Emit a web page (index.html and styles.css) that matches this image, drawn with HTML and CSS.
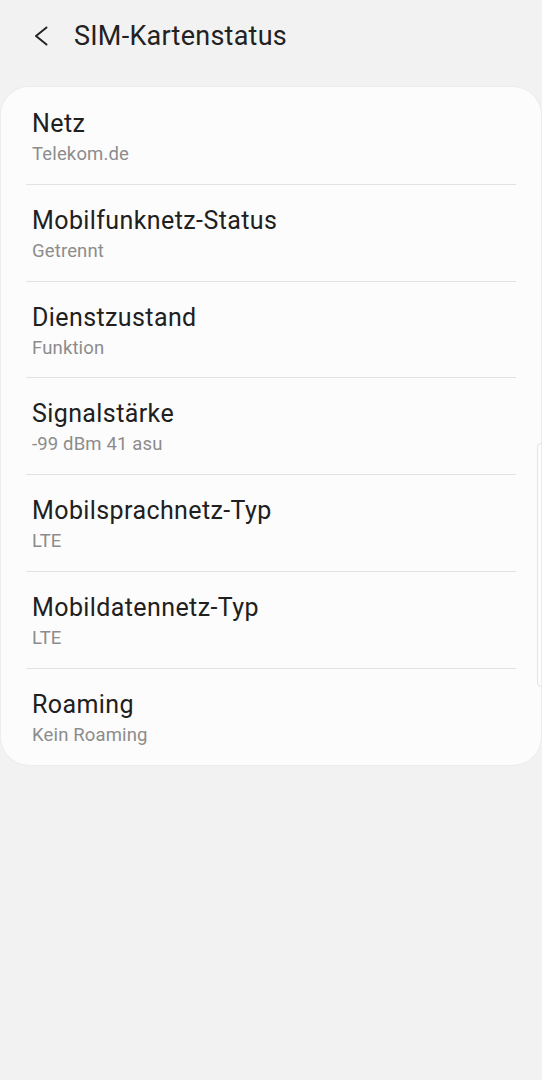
FILE: index.html
```html
<!DOCTYPE html>
<html lang="de">
<head>
    <meta charset="UTF-8">
    <meta name="viewport" content="width=device-width, initial-scale=1.0">
    <title>SIM-Kartenstatus</title>
    <link rel="stylesheet" href="styles.css">
</head>
<body>
    <div class="header">
        <svg class="back" width="14" height="20" viewBox="0 0 14 20">
            <polyline points="12.5,1.5 2,10 12.5,18.5" fill="none" stroke="#252525" stroke-width="2" stroke-linecap="round" stroke-linejoin="round"/>
        </svg>
        <span class="title">SIM-Kartenstatus</span>
    </div>

    <div class="card">
        <div class="row">
            <span class="label">Netz</span>
            <span class="value">Telekom.de</span>
        </div>
        <div class="row">
            <span class="label">Mobilfunknetz-Status</span>
            <span class="value">Getrennt</span>
        </div>
        <div class="row">
            <span class="label">Dienstzustand</span>
            <span class="value">Funktion</span>
        </div>
        <div class="row">
            <span class="label">Signalstärke</span>
            <span class="value">-99 dBm 41 asu</span>
        </div>
        <div class="row">
            <span class="label">Mobilsprachnetz-Typ</span>
            <span class="value">LTE</span>
        </div>
        <div class="row">
            <span class="label">Mobildatennetz-Typ</span>
            <span class="value">LTE</span>
        </div>
        <div class="row">
            <span class="label">Roaming</span>
            <span class="value">Kein Roaming</span>
        </div>
    </div>

    <div class="scrollbar"></div>
</body>
</html>
```

FILE: styles.css
```css
* {
  box-sizing: border-box;
}
body {
  margin: 0;
  background: #f2f2f2;
  font-family: Roboto, "Noto Sans", sans-serif;
  color: #222;
  height: 1080px;
  position: relative;
}

.header {
  display: flex;
  align-items: center;
  padding: 20px 0 0 34px;
  height: 52px;
}
.back {
  display: block;
  margin-top: 0;
}
.title {
  margin-left: 26px;
  font-size: 27px;
  letter-spacing: 0.25px;
  line-height: 32px;
  color: #222;
}

.card {
  margin: 35px 1px 0 1px;
  background: #fcfcfc;
  border-radius: 28px;
  padding: 1px 0 0 0;
  box-shadow: 0 0 0 1px #ececec;
}

.row {
  display: flex;
  flex-direction: column;
  gap: 2px;
  margin: 0 25px;
  padding: 20px 6px 17.8px 6px;
  border-bottom: 1px solid #e2e2e2;
}
.row:last-child {
  border-bottom: none;
}
.label {
  font-size: 25px;
  letter-spacing: 0.4px;
  line-height: 32px;
  color: #202020;
}
.value {
  font-size: 18.5px;
  letter-spacing: 0.15px;
  line-height: 24px;
  color: #8c8c8c;
}

.scrollbar {
  position: absolute;
  top: 443px;
  left: 537px;
  width: 8px;
  height: 244px;
  border: 1px solid #e4e4e4;
  border-radius: 4px;
}
```
